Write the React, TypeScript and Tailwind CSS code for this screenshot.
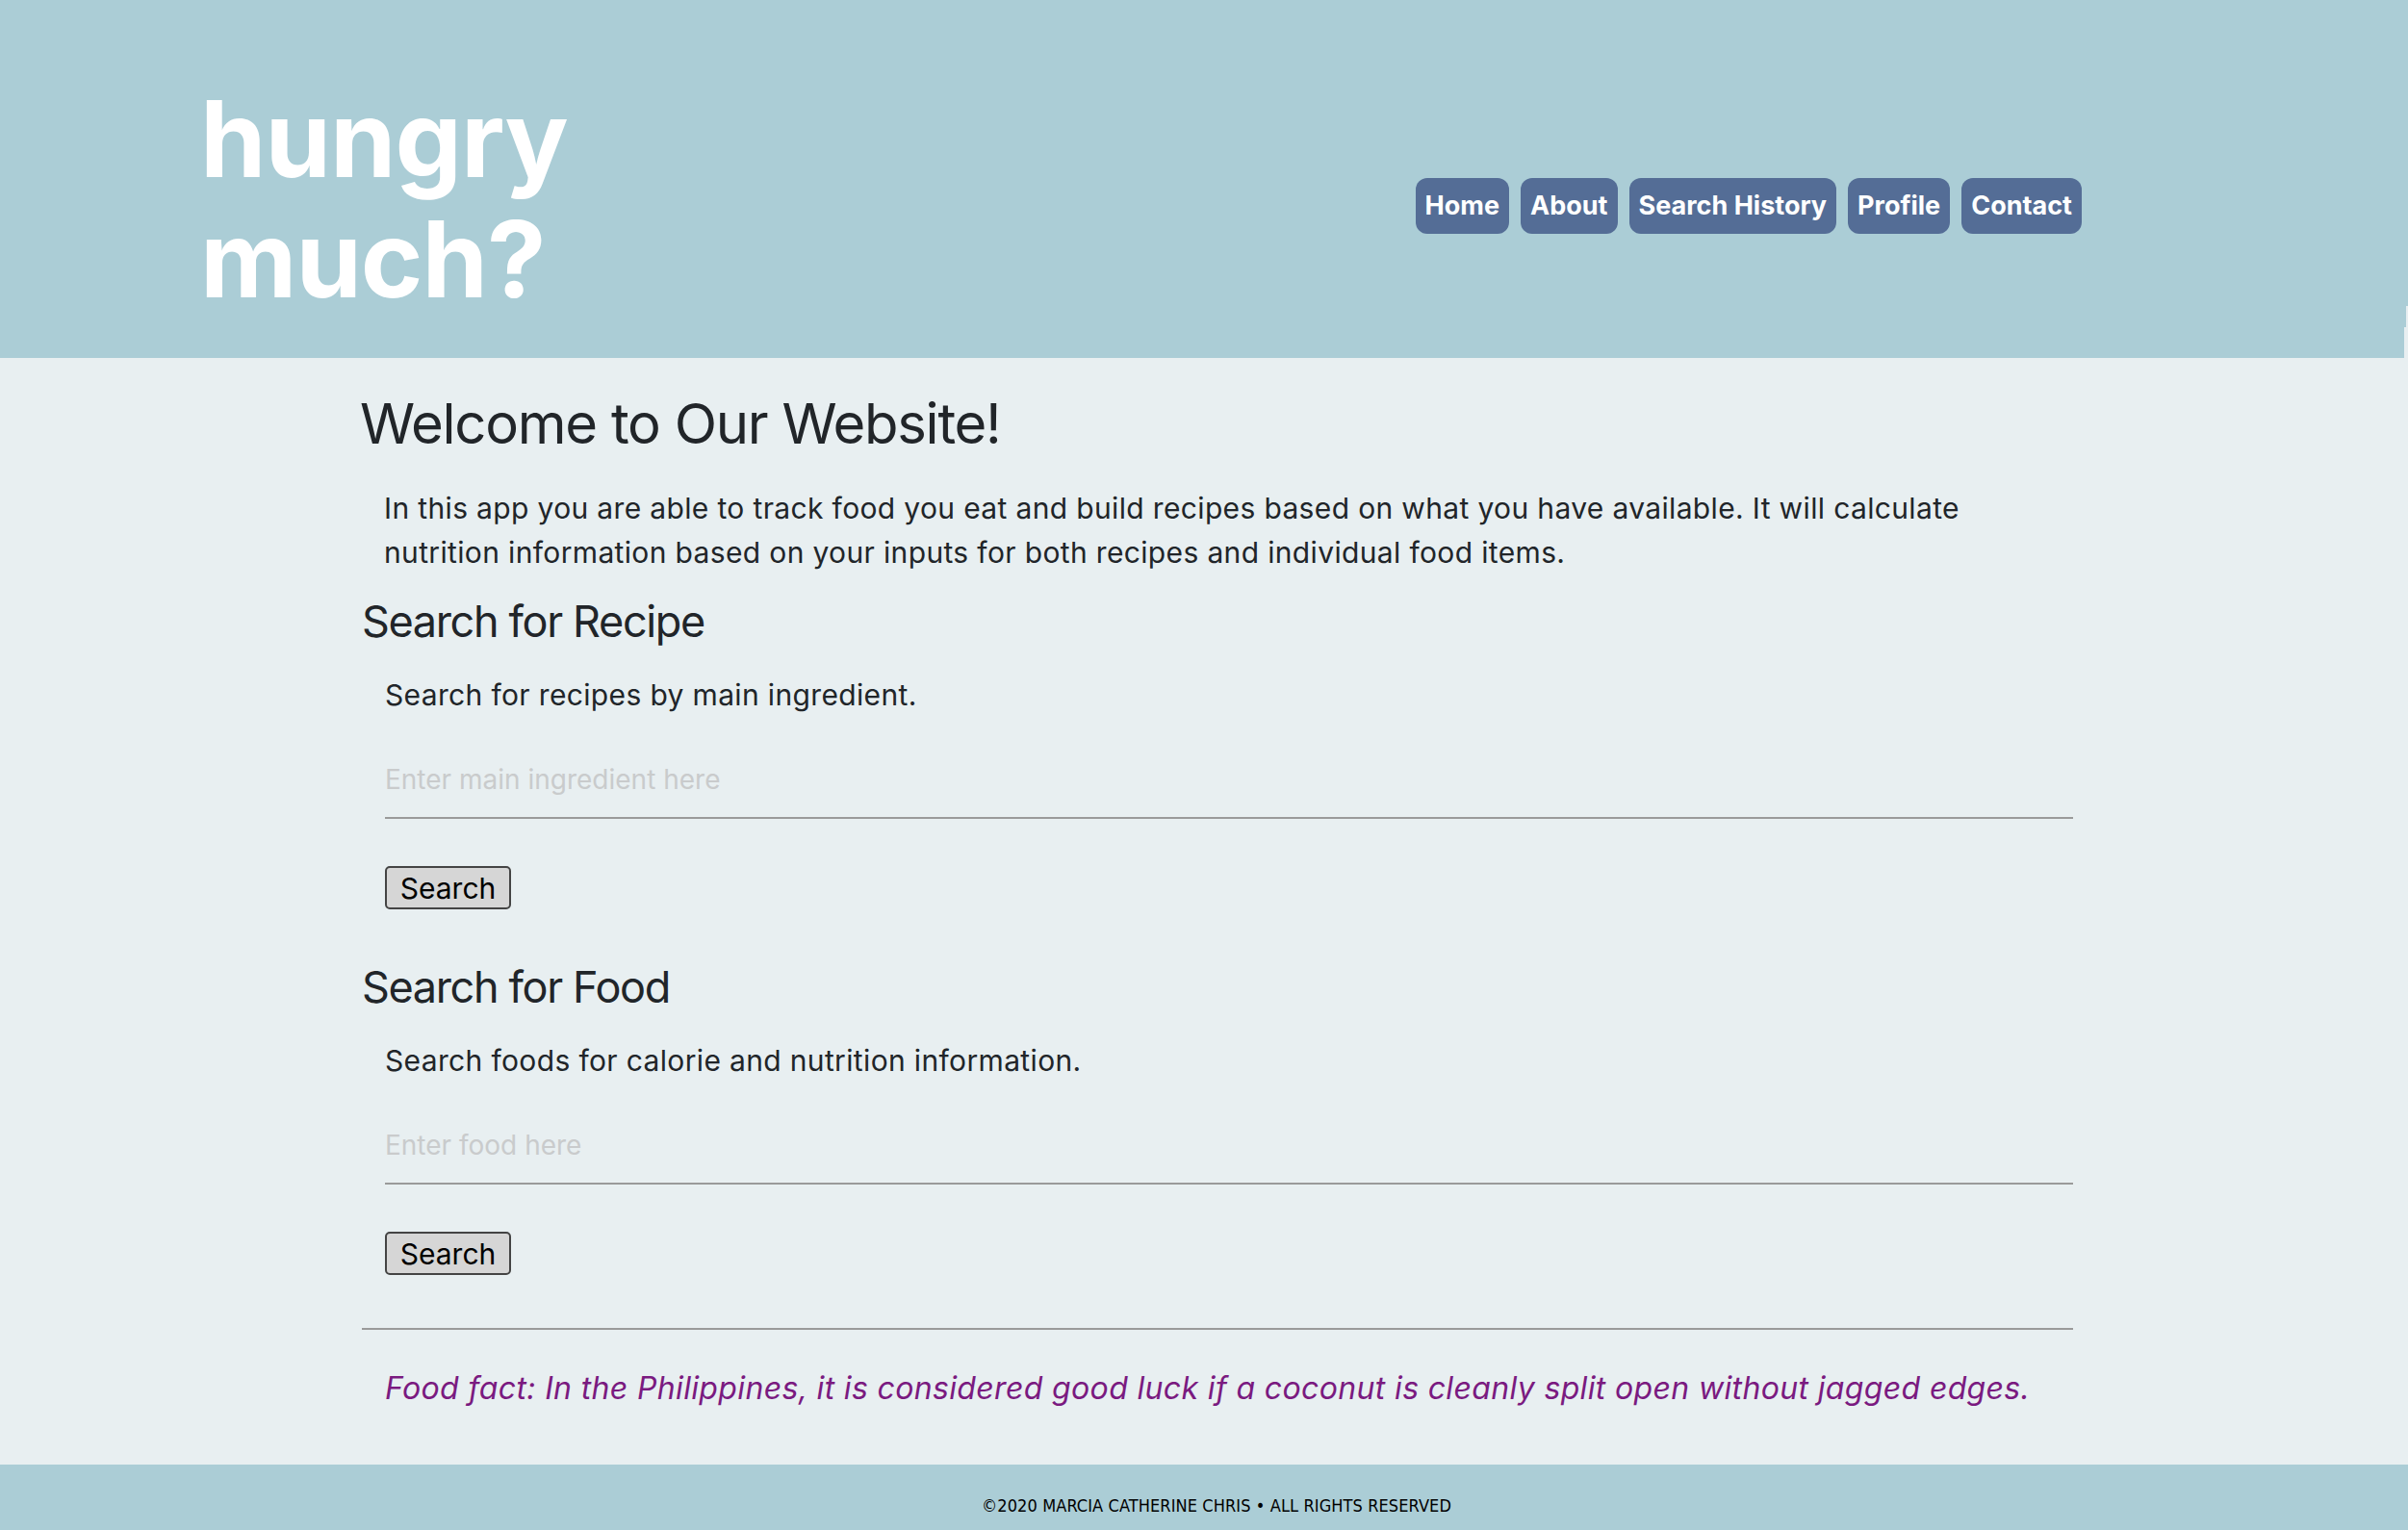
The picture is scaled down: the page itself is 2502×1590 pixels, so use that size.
import React from "react";

const navItems = ["Home", "About", "Search History", "Profile", "Contact"];

function SearchSection({
  title,
  desc,
  placeholder,
  topMargin,
}: {
  title: string;
  desc: string;
  placeholder: string;
  topMargin: string;
}) {
  return (
    <section className={topMargin}>
      <h2 className="text-[45px] leading-[54px] font-normal tracking-[-1.35px] text-[#212529]">{title}</h2>
      <p className="mt-[26px] pl-[24px] text-[30px] leading-[46px] tracking-[0.35px] text-[#212529]">{desc}</p>
      <div className="mt-[34px] pl-[24px]">
        <input
          type="text"
          placeholder={placeholder}
          className="block w-full bg-transparent border-0 border-b-2 border-[#9a9a9a] pt-[14px] pb-[22px] text-[28px] leading-[34px] text-[#212529] placeholder:text-[#c9cbcc] outline-none"
        />
      </div>
      <div className="mt-[49px] pl-[24px]">
        <button className="flex items-center justify-center w-[131px] h-[45px] bg-[#d6d6d6] border-2 border-[#444444] rounded-[5px] text-[30px] leading-none text-black">
          Search
        </button>
      </div>
    </section>
  );
}

export default function App() {
  return (
    <div className="h-[1590px] flex flex-col bg-[#e8eff1] font-['Inter',sans-serif] overflow-hidden">
      <header className="relative h-[372px] shrink-0 bg-[#abcdd6] flex justify-between items-start pl-[208px] pr-[339px]">
        <h1 className="mt-[82px] text-[110px] leading-[125px] font-bold text-white tracking-[-1px]">
          hungry
          <br />
          much?
        </h1>
        <nav className="mt-[185px] flex gap-[12px]">
          {navItems.map((n) => (
            <a
              key={n}
              className="h-[58px] flex items-center px-[10px] rounded-[12px] bg-[#546d96] text-white font-bold text-[27px]"
            >
              {n}
            </a>
          ))}
        </nav>
        <div className="absolute right-0 top-[340px] w-[4px] h-[32px] bg-[#e8eff1]" />
        <div className="absolute right-0 top-[318px] w-[2px] h-[22px] bg-[#e8eff1]" />
      </header>

      <main className="flex-1 ml-[376px] w-[1778px]">
        <h1 className="mt-[33px] -ml-[2px] text-[58px] leading-[70px] font-normal tracking-[-1.25px] text-[#212529]">
          Welcome to Our Website!
        </h1>
        <p className="mt-[30px] pl-[23px] pr-[100px] text-[30px] leading-[46px] tracking-[0.35px] text-[#212529]">
          In this app you are able to track food you eat and build recipes based on what you have available. It will
          calculate nutrition information based on your inputs for both recipes and individual food items.
        </p>
        <SearchSection
          title="Search for Recipe"
          desc="Search for recipes by main ingredient."
          placeholder="Enter main ingredient here"
          topMargin="mt-[22px]"
        />
        <SearchSection
          title="Search for Food"
          desc="Search foods for calorie and nutrition information."
          placeholder="Enter food here"
          topMargin="mt-[54px]"
        />
        <hr className="mt-[55px] border-0 border-t-2 border-[#9a9a9a]" />
        <p className="mt-[38px] pl-[24px] text-[32px] leading-[46px] tracking-[0.35px] italic text-[#7a1a80]">
          Food fact: In the Philippines, it is considered good luck if a coconut is cleanly split open without jagged
          edges.
        </p>
      </main>

      <footer className="h-[68px] shrink-0 bg-[#abcdd6] flex justify-center pt-[33px]">
        <p className="ml-[26px] text-[18px] leading-[20px] tracking-[0.1px] text-black font-['DejaVu_Sans_Condensed','DejaVu_Sans',sans-serif]">
          ©2020 MARCIA CATHERINE CHRIS • ALL RIGHTS RESERVED
        </p>
      </footer>
    </div>
  );
}
